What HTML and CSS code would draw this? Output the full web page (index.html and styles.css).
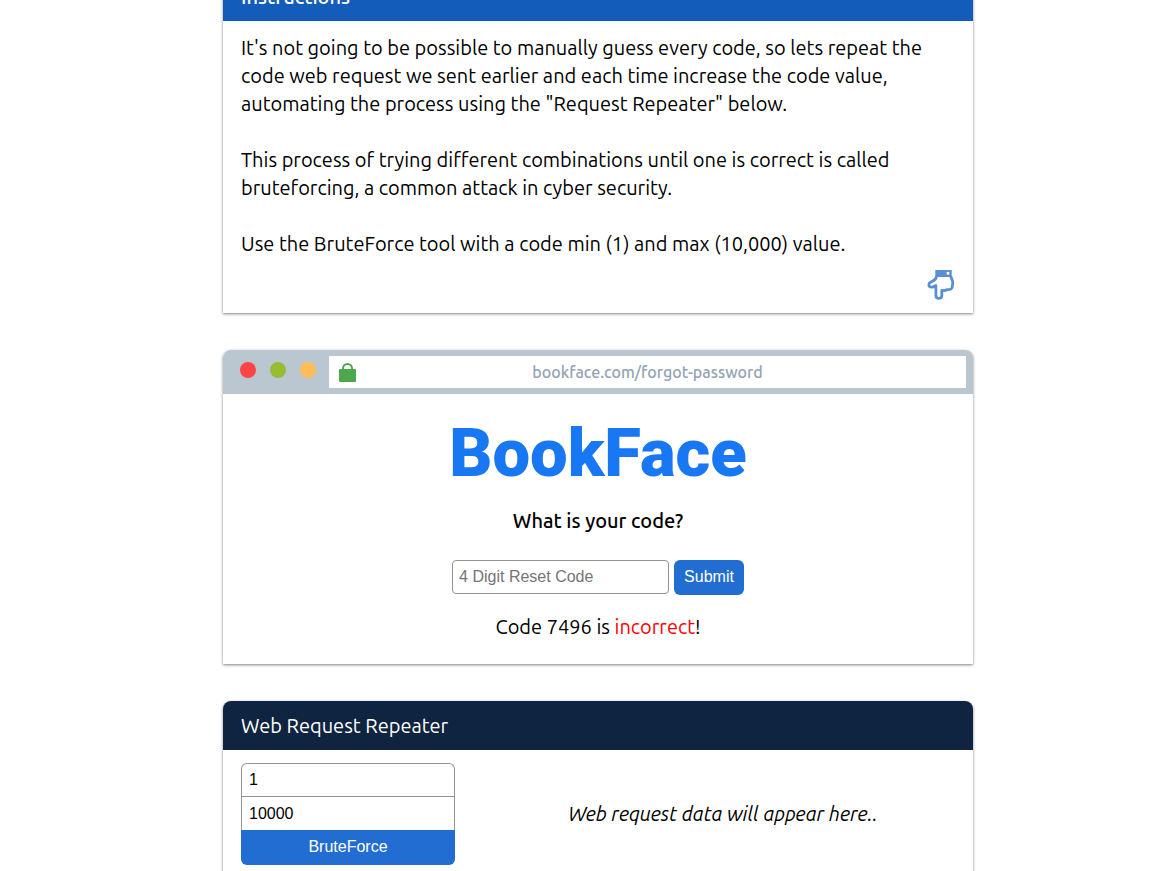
FILE: index.html
```html
<!DOCTYPE html>
<html lang="en">
<head>
<meta charset="utf-8">
<title>BookFace reset</title>
<link rel="stylesheet" href="styles.css">
</head>
<body>
<main class="page">
  <section class="card">
    <h2 class="card-title card-title-blue">Instructions</h2>
    <div class="instructions">
      <p>It's not going to be possible to manually guess every code, so lets repeat the<br>code web request we sent earlier and each time increase the code value,<br>automating the process using the "Request Repeater" below.</p>
      <p>This process of trying different combinations until one is correct is called<br>bruteforcing, a common attack in cyber security.</p>
      <p>Use the BruteForce tool with a code min (1) and max (10,000) value.</p>
      <svg class="hand" viewBox="0 0 28 32" aria-hidden="true">
        <path fill="#5a8fd2" fill-rule="evenodd" d="M8.300 2H24.700V9H8.300ZM21 3.700a1.600 1.600 0 1 0 .01 0Z"/>
        <path fill="none" stroke="#5a8fd2" stroke-width="2.800" stroke-linejoin="round" stroke-linecap="round" d="M9.300 9C9 12 6 13 3.500 14.300C1 15.800 1.500 19 4.300 19.200C6 19.300 7.500 18.500 8.900 17.500V27.500C8.900 31.400 14.800 31.400 14.800 27.500V22.500C17.500 22.700 19 22.500 20 21.600C23.500 22 25.800 20.500 25.300 17.500C26.300 15 25.500 12 24 9"/>
      </svg>
    </div>
  </section>

  <section class="card">
    <div class="browser-bar">
      <span class="dots"><i class="dot dot-red"></i><i class="dot dot-green"></i><i class="dot dot-amber"></i></span>
      <div class="address">
        <svg class="lock" viewBox="0 0 17 19" aria-hidden="true">
          <rect y="6" width="17" height="13" rx="1" fill="#4ea64e"/>
          <path d="M4 7V5.500a4.500 4.500 0 0 1 9 0V7" fill="none" stroke="#4ea64e" stroke-width="2"/>
        </svg>
        <span class="url">bookface.com/forgot-password</span>
      </div>
    </div>
    <form class="reset">
      <div class="logo">BookFace</div>
      <label class="question" for="code">What is your code?</label>
      <div class="code-row">
        <input class="field code-field" id="code" type="text" placeholder="4 Digit Reset Code">
        <button class="button submit" type="button">Submit</button>
      </div>
      <p class="result">Code 7496 is <span class="wrong">incorrect</span>!</p>
    </form>
  </section>

  <section class="card">
    <h2 class="card-title card-title-navy">Web Request Repeater</h2>
    <div class="repeater">
      <form class="range">
        <input class="field range-min" type="text" value="1" aria-label="Minimum code">
        <input class="field range-max" type="text" value="10000" aria-label="Maximum code">
        <button class="button brute" type="button">BruteForce</button>
      </form>
      <p class="output">Web request data will appear here..</p>
    </div>
  </section>
</main>
</body>
</html>
```
FILE: styles.css
```css
* { box-sizing: border-box; }
body {
  margin: 0;
  background: #fff;
  color: #000;
  font: 20px/28px Ubuntu, "Noto Sans", sans-serif;
}
p, h2 { margin: 0; }
.page {
  display: flex;
  flex-direction: column;
  gap: 37px;
  max-width: 784px;
  margin: -28px auto 0;
  padding: 0 0 37px 34px;
}
.card {
  border-radius: 8px 8px 0 0;
  background: #fff;
  box-shadow: 0 1px 3px rgba(0, 0, 0, .5);
}
.card-title {
  padding: 11px 18px 10px;
  border-radius: 8px 8px 0 0;
  color: #fff;
  font-size: 20px;
  font-weight: 400;
}
.card-title-blue { background: #135cba; font-weight: 500; }
.card-title-navy { background: #0f2440; }
.instructions {
  display: flex;
  flex-direction: column;
  gap: 28px;
  padding: 13px 18px;
}
.hand {
  width: 28px;
  height: 32px;
  margin-top: -18px;
  align-self: flex-end;
}
.browser-bar {
  display: flex;
  gap: 13px;
  padding: 6px 7px 6px 17px;
  border-radius: 8px 8px 0 0;
  background: #bac7d1;
}
.dots { display: flex; gap: 14px; padding-top: 6px; }
.dot { width: 16px; height: 16px; border-radius: 50%; }
.dot-red { background: #ff4545; }
.dot-green { background: #98bd32; }
.dot-amber { background: #ffbd59; }
.address {
  flex: 1;
  display: flex;
  align-items: center;
  height: 32px;
  padding: 0 27px 0 10px;
  background: #fff;
}
.lock { width: 17px; height: 19px; }
.url {
  flex: 1;
  text-align: center;
  color: #94a3b5;
  font-size: 16px;
  font-weight: 500;
}
.reset {
  display: flex;
  flex-direction: column;
  align-items: center;
  padding: 21px 18px 23px;
}
.logo {
  color: #1877f2;
  font: 900 67px/76px Roboto, sans-serif;
}
.question { margin: 16px 0 25px; font-weight: 500; }
.code-row { display: flex; gap: 5px; }
.field {
  height: 34px;
  padding: 0 7px;
  border: 1px solid #949494;
  background: #fff;
  color: #000;
  font: 16px "Liberation Sans", Arial, sans-serif;
}
.field::placeholder { color: #757575; }
.code-field { width: 217px; padding: 0 6px; border-radius: 4px; }
.button {
  height: 35px;
  padding: 0 10px 1px;
  border: 0;
  background: #216dd1;
  color: #fff;
  font: 16px "Liberation Sans", Arial, sans-serif;
}
.submit { border-radius: 6px; }
.result { margin-top: 18px; }
.wrong { color: #f00; }
.repeater {
  display: flex;
  align-items: center;
  gap: 18px;
  padding: 13px 0 13px 18px;
}
.range { display: flex; flex-direction: column; width: 214px; }
.range-min { border-bottom: 0; border-radius: 6px 6px 0 0; height: 33px; }
.range-max { border-bottom: 0; }
.brute { border-radius: 0 0 6px 6px; }
.output { flex: 1; text-align: center; font-style: italic; }
```
